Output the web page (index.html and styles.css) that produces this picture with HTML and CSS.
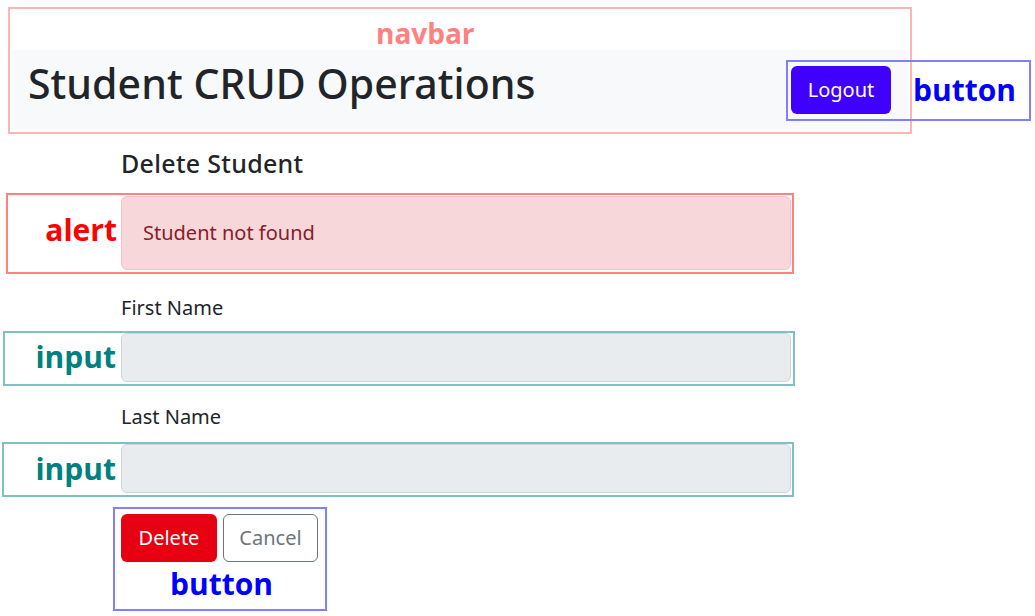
FILE: index.html
```html
<!DOCTYPE html>
<html lang="en">
<head>
<meta charset="utf-8">
<title>Student CRUD Operations</title>
<link rel="stylesheet" href="styles.css">
</head>
<body>
<div class="page">
  <nav class="navbar">
    <h1 class="brand">Student CRUD Operations</h1>
    <button class="btn btn-primary">Logout</button>
  </nav>
  <main class="content">
    <h2 class="page-title">Delete Student</h2>
    <div class="alert">Student not found</div>
    <label class="form-label">First Name</label>
    <div class="form-control"></div>
    <label class="form-label second">Last Name</label>
    <div class="form-control"></div>
    <div class="actions">
      <button class="btn btn-danger">Delete</button>
      <button class="btn btn-outline">Cancel</button>
    </div>
  </main>

  <div class="anno anno-navbar"><span class="anno-label">navbar</span></div>
  <div class="anno anno-logout"><span class="anno-label">button</span></div>
  <div class="anno anno-alert"><span class="anno-label">alert</span></div>
  <div class="anno anno-input1"><span class="anno-label">input</span></div>
  <div class="anno anno-input2"><span class="anno-label">input</span></div>
  <div class="anno anno-actions"><span class="anno-label">button</span></div>
</div>
</body>
</html>
```
FILE: styles.css
```css
* { box-sizing: border-box; }
html, body { margin: 0; padding: 0; background: #fff; }
body {
  font-family: "Noto Sans", "Open Sans", sans-serif;
  color: #212529;
  font-size: 20px;
  line-height: 1.5;
}
.page { position: relative; width: 1035px; height: 616px; overflow: hidden; }

.navbar {
  margin: 50px 0 0 12px;
  width: 896px;
  height: 80px;
  background: #f8f9fa;
  display: flex;
  align-items: center;
  justify-content: space-between;
  padding: 0 17px 0 16px;
}
.brand {
  margin: 0 0 12px;
  font-size: 41px;
  font-weight: 500;
  line-height: 1.2;
  letter-spacing: 0.05px;
  color: #212529;
}
.btn {
  font-family: inherit;
  font-size: 20px;
  line-height: 30px;
  padding: 8px 15px;
  border-radius: 6px;
  border: 1px solid transparent;
  cursor: pointer;
}
.btn-primary { background: #4000ff; color: #fff; width: 100px; height: 48px; }
.btn-danger { background: #e60012; color: #fff; width: 96px; height: 48px; }
.btn-outline { background: #fff; color: #6c757d; border-color: #6c757d; width: 95px; height: 48px; }

.content {
  margin-left: 121px;
  width: 670px;
  padding-top: 18px;
}
.page-title {
  margin: 0 0 18px;
  font-size: 25px;
  font-weight: 500;
  line-height: 30px;
  letter-spacing: 0.3px;
}
.alert {
  background: #f8d7da;
  border: 1px solid #f5c2c7;
  color: #842029;
  border-radius: 6px;
  padding: 21px 21px;
  height: 74px;
  line-height: 30px;
  margin-bottom: 23px;
}
.form-label { display: block; line-height: 30px; margin-bottom: 10px; }
.form-label.second { margin-top: 20px; margin-bottom: 12px; }
.form-control {
  height: 49px;
  background: #e9ecef;
  border: 1px solid #ced4da;
  border-radius: 6px;
}
.actions { display: flex; gap: 6px; margin-top: 21px; }

/* annotation overlays */
.anno { position: absolute; border: 2px solid; }
.anno-label {
  position: absolute;
  font-family: "Open Sans", "Noto Sans", sans-serif;
  font-weight: 700;
  font-size: 30px;
  line-height: 1;
  white-space: nowrap;
}
.anno-navbar { left: 8px; top: 7px; width: 904px; height: 127px; border-color: #ffb3b3; }
.anno-navbar .anno-label { color: #ff8080; left: 366px; top: 10px; font-size: 28px; }
.anno-logout { left: 786px; top: 60px; width: 245px; height: 61px; border-color: #8080ff; }
.anno-logout .anno-label { color: #0000ff; left: 125px; top: 13px; }
.anno-alert { left: 6px; top: 193px; width: 788px; height: 81px; border-color: #ff8080; }
.anno-alert .anno-label { color: #ff0000; right: 675px; top: 20px; }
.anno-input1 { left: 3px; top: 331px; width: 792px; height: 55px; border-color: #80c0c0; }
.anno-input1 .anno-label { color: #008080; right: 677px; top: 9px; }
.anno-input2 { left: 2px; top: 442px; width: 792px; height: 55px; border-color: #80c0c0; }
.anno-input2 .anno-label { color: #008080; right: 676px; top: 10px; }
.anno-actions { left: 113px; top: 507px; width: 214px; height: 104px; border-color: #8080ff; }
.anno-actions .anno-label { color: #0000ff; left: 55px; top: 60px; }
```
